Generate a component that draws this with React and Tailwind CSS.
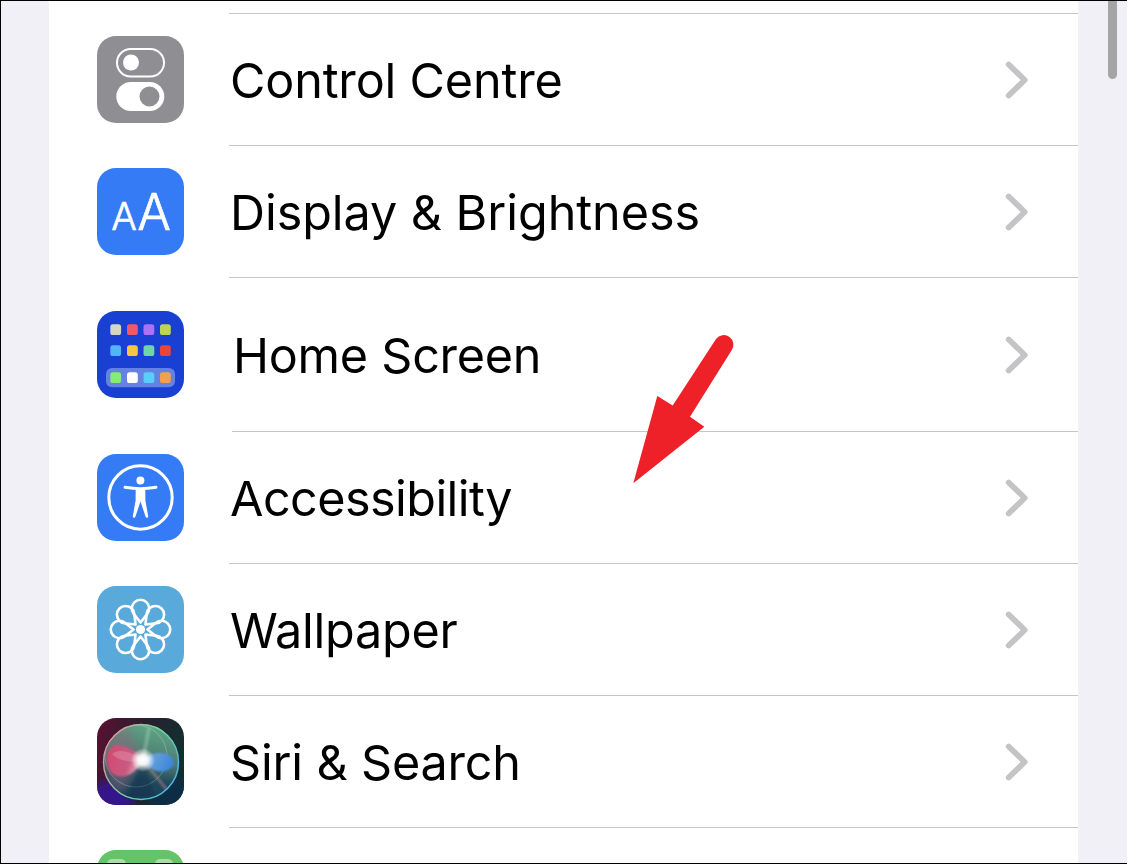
import React from "react";

function Chevron() {
  return (
    <svg width="26" height="40" viewBox="0 0 26 40" className="ml-auto mr-[48px] shrink-0">
      <path d="M4.7 4.5 L20.7 20 L4.7 35.5" fill="none" stroke="#c4c4c6" strokeWidth="5.8" strokeLinecap="round" strokeLinejoin="round" />
    </svg>
  );
}

function ControlIcon() {
  return (
    <svg width="87" height="87" viewBox="0 0 87 87" className="block">
      <rect width="87" height="87" rx="19" fill="#8e8e93" />
      <rect x="20" y="13" width="47" height="27.5" rx="13.75" fill="none" stroke="#fff" strokeWidth="2" />
      <circle cx="34" cy="26.5" r="8" fill="#fff" />
      <rect x="19.3" y="46" width="48" height="29" rx="14.5" fill="#fff" />
      <circle cx="52.5" cy="60.5" r="10" fill="#8e8e93" />
    </svg>
  );
}

function DisplayIcon() {
  return (
    <svg width="87" height="87" viewBox="0 0 87 87" className="block">
      <rect width="87" height="87" rx="19" fill="#357bf6" />
      <text x="27" y="61.5" textAnchor="middle" fontFamily="Inter, sans-serif" fontSize="38" fontWeight="300" fill="#fff" stroke="#fff" strokeWidth="0.7" strokeLinejoin="round">A</text>
      <text x="57" y="61.5" textAnchor="middle" fontFamily="Inter, sans-serif" fontSize="50" fontWeight="300" fill="#fff" stroke="#fff" strokeWidth="0.7" strokeLinejoin="round">A</text>
    </svg>
  );
}

function HomeIcon() {
  const xs = [13.3, 30, 46.5, 63];
  const r1 = ["#d5d5cc", "#ee5a6b", "#ab73f3", "#bcd453"];
  const r2 = ["#53b5f5", "#f6c73e", "#70d6a8", "#e84638"];
  const r3 = ["#85ec7a", "#ffffff", "#5ccdfa", "#f29f55"];
  const rowOf = (cols, y) =>
    cols.map((c, i) => <rect key={c} x={xs[i]} y={y} width="10.8" height="10.8" rx="2.6" fill={c} />);
  return (
    <svg width="87" height="87" viewBox="0 0 87 87" className="block">
      <rect width="87" height="87" rx="19" fill="#193fd3" />
      {rowOf(r1, 13.3)}
      {rowOf(r2, 34.3)}
      <rect x="9" y="57" width="69" height="19.3" rx="6" fill="#6482e2" />
      {rowOf(r3, 61.3)}
    </svg>
  );
}

function AccessIcon() {
  return (
    <svg width="87" height="87" viewBox="0 0 87 87" className="block">
      <rect width="87" height="87" rx="19" fill="#357bf6" />
      <circle cx="43.5" cy="43.5" r="31.7" fill="none" stroke="#fff" strokeWidth="3" />
      <circle cx="43.4" cy="26.6" r="4" fill="#fff" />
      <path d="M28 33.2 Q36 34.6 43.5 34.6 Q51 34.6 59 33.2" fill="none" stroke="#fff" strokeWidth="2.9" strokeLinecap="round" />
      <path
        d="M38.7 35 L38.6 46.5 L35.8 62.2 A1.3 1.3 0 0 0 38.4 62.7 L43.5 47.5 L48.6 62.7 A1.3 1.3 0 0 0 51.2 62.2 L48.4 46.5 L48.3 35 Z"
        fill="#fff"
      />
    </svg>
  );
}

function WallpaperIcon() {
  const angles = [0, 45, 90, 135, 180, 225, 270, 315];
  return (
    <svg width="87" height="87" viewBox="0 0 87 87" className="block">
      <rect width="87" height="87" rx="19" fill="#59a9da" />
      <g transform="translate(43.5 43.5)" fill="none" stroke="#fff" strokeWidth="2.6" strokeLinejoin="round">
        {angles.map((a) => (
          <path key={a} transform={`rotate(${a})`} d="M0 -7 L-6.8 -15.6 A8.7 8.7 0 1 1 6.8 -15.6 Z" />
        ))}
        <circle r="4.6" fill="#fff" stroke="none" />
      </g>
    </svg>
  );
}

function SiriIcon() {
  return (
    <svg width="87" height="87" viewBox="0 0 87 87" className="block">
      <defs>
        <clipPath id="siriClip"><rect width="87" height="87" rx="19" /></clipPath>
        <clipPath id="siriBallClip"><circle cx="44" cy="44" r="38" /></clipPath>
        <linearGradient id="siriEdge" x1="0" y1="0" x2="1" y2="0.35">
          <stop offset="0" stopColor="#5e0f30" />
          <stop offset="0.5" stopColor="#2a1f30" />
          <stop offset="1" stopColor="#12302e" />
        </linearGradient>
        <linearGradient id="siriBall" x1="0.6" y1="0" x2="0.4" y2="1">
          <stop offset="0" stopColor="#5fa886" />
          <stop offset="0.45" stopColor="#4d7a72" />
          <stop offset="0.7" stopColor="#1f4a5c" />
          <stop offset="1" stopColor="#173a58" />
        </linearGradient>
        <linearGradient id="siriRing" x1="0" y1="0.3" x2="1" y2="0.8">
          <stop offset="0" stopColor="#e5909c" />
          <stop offset="0.5" stopColor="#6fd69a" />
          <stop offset="1" stopColor="#4fb0f0" />
        </linearGradient>
        <linearGradient id="siriPink" x1="0" y1="0" x2="1" y2="0.3">
          <stop offset="0" stopColor="#d8476f" />
          <stop offset="0.7" stopColor="#c85a80" />
          <stop offset="1" stopColor="#e8b0c0" />
        </linearGradient>
        <linearGradient id="siriBlue" x1="0" y1="0" x2="1" y2="0.3">
          <stop offset="0" stopColor="#7ab0d8" />
          <stop offset="1" stopColor="#3f86dc" />
        </linearGradient>
        <radialGradient id="siriCore">
          <stop offset="0" stopColor="#fff" />
          <stop offset="0.4" stopColor="#fff" stopOpacity="0.9" />
          <stop offset="1" stopColor="#fff" stopOpacity="0" />
        </radialGradient>
        <filter id="siriBlur" x="-30%" y="-30%" width="160%" height="160%"><feGaussianBlur stdDeviation="1.3" /></filter>
        <filter id="siriBlur2" x="-60%" y="-60%" width="220%" height="220%"><feGaussianBlur stdDeviation="5" /></filter>
      </defs>
      <g clipPath="url(#siriClip)">
        <rect width="87" height="87" fill="url(#siriEdge)" />
        <circle cx="14" cy="84" r="22" fill="#35149a" opacity="0.85" filter="url(#siriBlur2)" />
        <circle cx="76" cy="82" r="24" fill="#0c2f4a" opacity="0.9" filter="url(#siriBlur2)" />
        <circle cx="44" cy="44" r="38" fill="url(#siriBall)" />
        <g clipPath="url(#siriBallClip)">
          <path d="M6 44 A38 38 0 0 1 30 8 L46 42 L24 76 A38 38 0 0 1 6 44Z" fill="#8a6a7c" opacity="0.55" filter="url(#siriBlur2)" />
          <circle cx="39" cy="38" r="31" fill="none" stroke="#cfe6d8" strokeWidth="0.8" opacity="0.4" />
          <path d="M46 42 L30 78 L58 78Z" fill="#15334e" opacity="0.45" filter="url(#siriBlur)" />
          <path d="M46 42 L70 72" stroke="#d58a90" strokeWidth="3" opacity="0.45" filter="url(#siriBlur)" />
          <path d="M46 42 L52 10" stroke="#b8dcc6" strokeWidth="4" opacity="0.35" filter="url(#siriBlur)" />
        </g>
        <path d="M47 42 C38 32 26 26 17 28 C9 31 8 45 13 53 C18 60 28 60 35 55 C40 51 43 47 47 42Z" fill="url(#siriPink)" filter="url(#siriBlur)" />
        <path d="M15 36 C23 29 36 35 46 42 C36 45 23 44 15 36Z" fill="#f3c0cc" opacity="0.28" />
        <path d="M46 42 C53 35 62 34 70 36 C77 39 79 46 74 50 C67 56 56 54 50 47Z" fill="url(#siriBlue)" filter="url(#siriBlur)" />
        <circle cx="44" cy="44" r="37.5" fill="none" stroke="url(#siriRing)" strokeWidth="1.4" />
        <circle cx="46" cy="42" r="12" fill="url(#siriCore)" />
      </g>
    </svg>
  );
}

function Row({ icon, label, height = "h-[131px]", textPad = "pl-[46px]", tracking = "tracking-[-0.25px]" }) {
  return (
    <div className={`flex items-center pl-[48px] ${height}`}>
      <div className="w-[87px] h-[87px] shrink-0">{icon}</div>
      <div className={`${textPad} pt-[3px] text-[48.5px] leading-none text-black ${tracking}`}>{label}</div>
      <Chevron />
    </div>
  );
}

function Sep({ className = "ml-[180px]" }) {
  return <div className={`h-px bg-[#c6c6c8] ${className}`} />;
}

export default function App() {
  return (
    <div className="h-[864px] w-[1127px] overflow-hidden relative border-t border-b border-l border-black bg-[#f1f0f6] font-['Inter','Liberation_Sans',sans-serif]">
      <div className="ml-[48px] w-[1029px] h-full bg-white overflow-hidden">
        <div className="h-[12px]" />
        <Sep />
        <Row icon={<ControlIcon />} label="Control Centre" tracking="tracking-[-0.17px]" />
        <Sep />
        <Row icon={<DisplayIcon />} label="Display & Brightness" tracking="tracking-[-0.05px]" />
        <Sep />
        <Row icon={<HomeIcon />} label="Home Screen" height="h-[153px]" textPad="pl-[49px]" />
        <Sep className="ml-[183px]" />
        <Row icon={<AccessIcon />} label="Accessibility" tracking="tracking-[-0.55px]" />
        <Sep />
        <Row icon={<WallpaperIcon />} label="Wallpaper" />
        <Sep />
        <Row icon={<SiriIcon />} label="Siri & Search" tracking="tracking-[-0.17px]" />
        <Sep />
        <div className="pl-[48px] pt-[22px]">
          <div className="w-[87px] h-[87px] rounded-[19px] bg-[#65c466] relative overflow-hidden">
            <div className="absolute left-[10px] top-[9px] w-[19px] h-[12px] rounded-[5px] bg-[#a8dfa8]" />
            <div className="absolute left-[58px] top-[9px] w-[18px] h-[12px] rounded-[5px] bg-[#a8dfa8]" />
          </div>
        </div>
      </div>
      <div className="absolute left-[1107px] top-0 w-[9px] h-[78px] bg-[#a5a5a8] rounded-b-[5px]" />
      <svg width="130" height="170" viewBox="0 0 130 170" className="absolute left-[609px] top-[324px]">
        <path
          d="M23.3 158.3 L47.3 71 L62.7 80.5 L106 14 A9.6 9.6 0 0 1 121.5 25.5 L80 91.7 L94.3 101.7 Z"
          fill="#ee2028"
        />
      </svg>
    </div>
  );
}
